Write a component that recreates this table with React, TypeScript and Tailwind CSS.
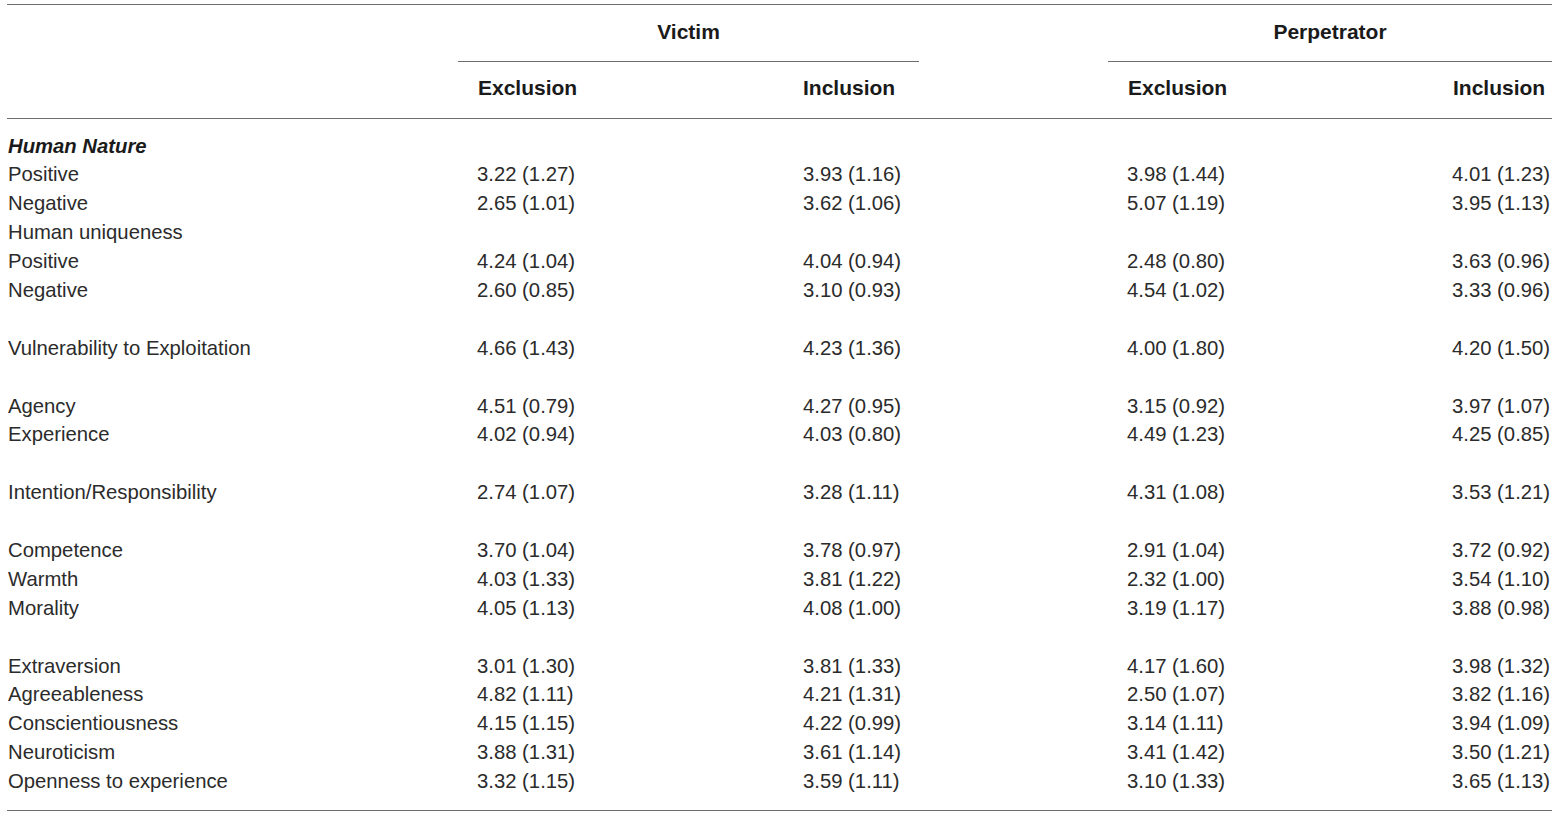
import React from "react";

type Row = { label: string; vals?: string[]; bold?: boolean };

const rows: Row[] = [
  { label: "Human Nature", bold: true },
  { label: "Positive", vals: ["3.22 (1.27)", "3.93 (1.16)", "3.98 (1.44)", "4.01 (1.23)"] },
  { label: "Negative", vals: ["2.65 (1.01)", "3.62 (1.06)", "5.07 (1.19)", "3.95 (1.13)"] },
  { label: "Human uniqueness" },
  { label: "Positive", vals: ["4.24 (1.04)", "4.04 (0.94)", "2.48 (0.80)", "3.63 (0.96)"] },
  { label: "Negative", vals: ["2.60 (0.85)", "3.10 (0.93)", "4.54 (1.02)", "3.33 (0.96)"] },
  { label: "" },
  { label: "Vulnerability to Exploitation", vals: ["4.66 (1.43)", "4.23 (1.36)", "4.00 (1.80)", "4.20 (1.50)"] },
  { label: "" },
  { label: "Agency", vals: ["4.51 (0.79)", "4.27 (0.95)", "3.15 (0.92)", "3.97 (1.07)"] },
  { label: "Experience", vals: ["4.02 (0.94)", "4.03 (0.80)", "4.49 (1.23)", "4.25 (0.85)"] },
  { label: "" },
  { label: "Intention/Responsibility", vals: ["2.74 (1.07)", "3.28 (1.11)", "4.31 (1.08)", "3.53 (1.21)"] },
  { label: "" },
  { label: "Competence", vals: ["3.70 (1.04)", "3.78 (0.97)", "2.91 (1.04)", "3.72 (0.92)"] },
  { label: "Warmth", vals: ["4.03 (1.33)", "3.81 (1.22)", "2.32 (1.00)", "3.54 (1.10)"] },
  { label: "Morality", vals: ["4.05 (1.13)", "4.08 (1.00)", "3.19 (1.17)", "3.88 (0.98)"] },
  { label: "" },
  { label: "Extraversion", vals: ["3.01 (1.30)", "3.81 (1.33)", "4.17 (1.60)", "3.98 (1.32)"] },
  { label: "Agreeableness", vals: ["4.82 (1.11)", "4.21 (1.31)", "2.50 (1.07)", "3.82 (1.16)"] },
  { label: "Conscientiousness", vals: ["4.15 (1.15)", "4.22 (0.99)", "3.14 (1.11)", "3.94 (1.09)"] },
  { label: "Neuroticism", vals: ["3.88 (1.31)", "3.61 (1.14)", "3.41 (1.42)", "3.50 (1.21)"] },
  { label: "Openness to experience", vals: ["3.32 (1.15)", "3.59 (1.11)", "3.10 (1.33)", "3.65 (1.13)"] },
];

const cols = "grid grid-cols-[451px_325px_136px_189px_325px_119px]";

export default function App() {
  return (
    <div
      className="w-[1560px] h-[816px] bg-white text-[20.3px] text-[#2b2b2b] pt-[4px] pl-[7px]"
      style={{ fontFamily: '"Liberation Sans", Arial, sans-serif' }}
    >
      <div className="w-[1545px] border-t border-b border-[#6e6e6e]">
        {/* group header */}
        <div className={`${cols} text-[21px]`}>
          <div />
          <div className="col-span-2 border-b border-[#6e6e6e] pt-[13px] pb-[15px] leading-[28px] text-center font-bold text-[#1a1a1a]">
            Victim
          </div>
          <div />
          <div className="col-span-2 border-b border-[#6e6e6e] pt-[13px] pb-[15px] leading-[28px] text-center font-bold text-[#1a1a1a]">
            Perpetrator
          </div>
        </div>
        {/* sub header */}
        <div className={`${cols} text-[21px] border-b border-[#6e6e6e] pt-[12px] pb-[16px] leading-[28px] font-bold text-[#1a1a1a]`}>
          <div />
          <div className="pl-[20px]">Exclusion</div>
          <div className="pl-[20px]">Inclusion</div>
          <div />
          <div className="pl-[20px]">Exclusion</div>
          <div className="pl-[20px]">Inclusion</div>
        </div>
        {/* body */}
        <div className="pt-[12.5px] pb-[14.5px]">
          {rows.map((r, i) => (
            <div key={i} className={`${cols} h-[28.9px] leading-[28.9px] whitespace-nowrap`}>
              <div className={`pl-[1px] ${r.bold ? "font-bold italic text-[#1a1a1a]" : ""}`}>{r.label}</div>
              <div className="pl-[19px]">{r.vals ? r.vals[0] : ""}</div>
              <div className="pl-[20px]">{r.vals ? r.vals[1] : ""}</div>
              <div />
              <div className="pl-[19px]">{r.vals ? r.vals[2] : ""}</div>
              <div className="pl-[19px]">{r.vals ? r.vals[3] : ""}</div>
            </div>
          ))}
        </div>
      </div>
    </div>
  );
}
